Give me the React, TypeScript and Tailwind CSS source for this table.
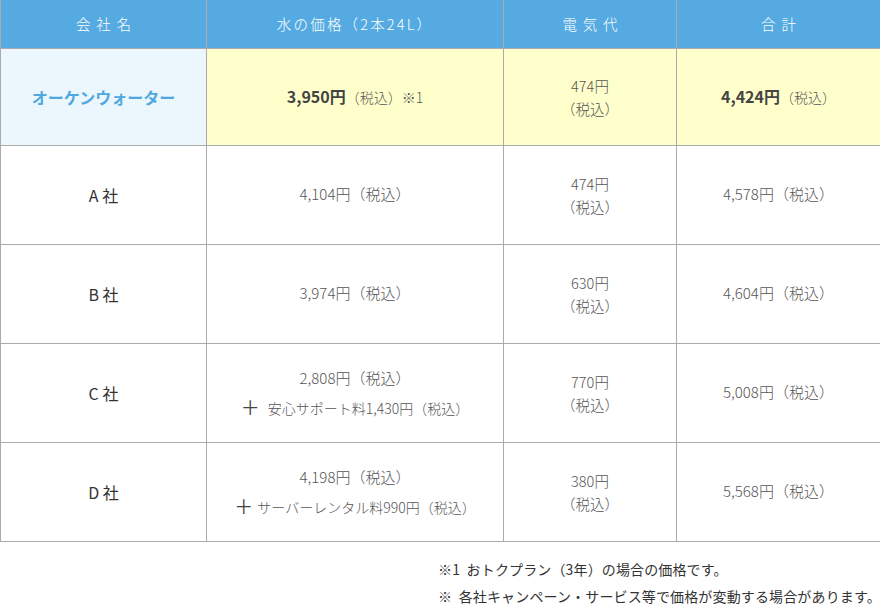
import React from "react";

const font = { fontFamily: '"Noto Sans CJK JP", "Noto Sans", sans-serif' };

function Tax({ small }: { small?: boolean }) {
  return <span className={small ? "text-[14px]" : ""}>（税込）</span>;
}

function Elec({ v }: { v: string }) {
  return (
    <div className="leading-[23px] text-[14.5px]">
      <div>{v}円</div>
      <div>（税込）</div>
    </div>
  );
}

const rows = [
  { name: "A 社", water: <div>4,104円（税込）</div>, elec: "474", total: "4,578" },
  { name: "B 社", water: <div>3,974円（税込）</div>, elec: "630", total: "4,604" },
  {
    name: "C 社",
    water: (
      <div className="leading-[29px]">
        <div>2,808円（税込）</div>
        <div className="text-[14px]">
          <span className="text-[19px] mr-2 align-[-1px] font-normal text-[#444]">＋</span>安心サポート料1,430円（税込）
        </div>
      </div>
    ),
    elec: "770",
    total: "5,008",
  },
  {
    name: "D 社",
    water: (
      <div className="leading-[29px]">
        <div>4,198円（税込）</div>
        <div className="text-[14px]">
          <span className="text-[19px] mr-1 align-[-1px] font-normal text-[#444]">＋</span>サーバーレンタル料990円（税込）
        </div>
      </div>
    ),
    elec: "380",
    total: "5,568",
  },
];

export default function App() {
  return (
    <div className="w-[880px] h-[604px] bg-white text-[#555] text-[15px] font-light" style={font}>
      <table className="w-[880px] border-collapse table-fixed">
        <colgroup>
          <col className="w-[206px]" />
          <col className="w-[297px]" />
          <col className="w-[173px]" />
          <col className="w-[204px]" />
        </colgroup>
        <thead>
          <tr className="h-[48px] bg-[#55aae1] text-white text-[14.5px]">
            <th className="border border-[#ababab] border-t-0 font-light tracking-[0.4em] pl-[0.4em]">会社名</th>
            <th className="border border-[#ababab] border-t-0 font-light tracking-[0.15em]">水の価格（2本24L）</th>
            <th className="border border-[#ababab] border-t-0 font-light tracking-[0.4em] pl-[0.4em]">電気代</th>
            <th className="border border-[#ababab] border-t-0 font-light tracking-[0.4em] pl-[0.4em]">合計</th>
          </tr>
        </thead>
        <tbody className="text-center">
          <tr className="h-[97px]">
            <td className="border border-[#ababab] bg-[#ebf6fd] text-[#4fa8e0] font-bold text-[16px]">
              オーケンウォーター
            </td>
            <td className="border border-[#ababab] bg-[#ffffcc]">
              <span className="font-bold text-[16px] text-[#444]">3,950円</span>
              <span className="text-[14px]">（税込）※1</span>
            </td>
            <td className="border border-[#ababab] bg-[#ffffcc]">
              <Elec v="474" />
            </td>
            <td className="border border-[#ababab] bg-[#ffffcc]">
              <span className="font-bold text-[16px] text-[#444]">4,424円</span>
              <Tax small />
            </td>
          </tr>
          {rows.map((r) => (
            <tr key={r.name} className="h-[99px]">
              <td className="border border-[#ababab] text-[#333] text-[16px] font-normal">{r.name}</td>
              <td className="border border-[#ababab]">{r.water}</td>
              <td className="border border-[#ababab]">
                <Elec v={r.elec} />
              </td>
              <td className="border border-[#ababab]">
                {r.total}円<Tax />
              </td>
            </tr>
          ))}
        </tbody>
      </table>
      <div className="pt-[14px] pl-[438px]">
        <div className="text-[14px] text-[#333] leading-[27px] font-normal tracking-[0.01em] whitespace-nowrap">
          <div>※1&nbsp; おトクプラン（3年）の場合の価格です。</div>
          <div>※&nbsp; 各社キャンペーン・サービス等で価格が変動する場合があります。</div>
        </div>
      </div>
    </div>
  );
}
